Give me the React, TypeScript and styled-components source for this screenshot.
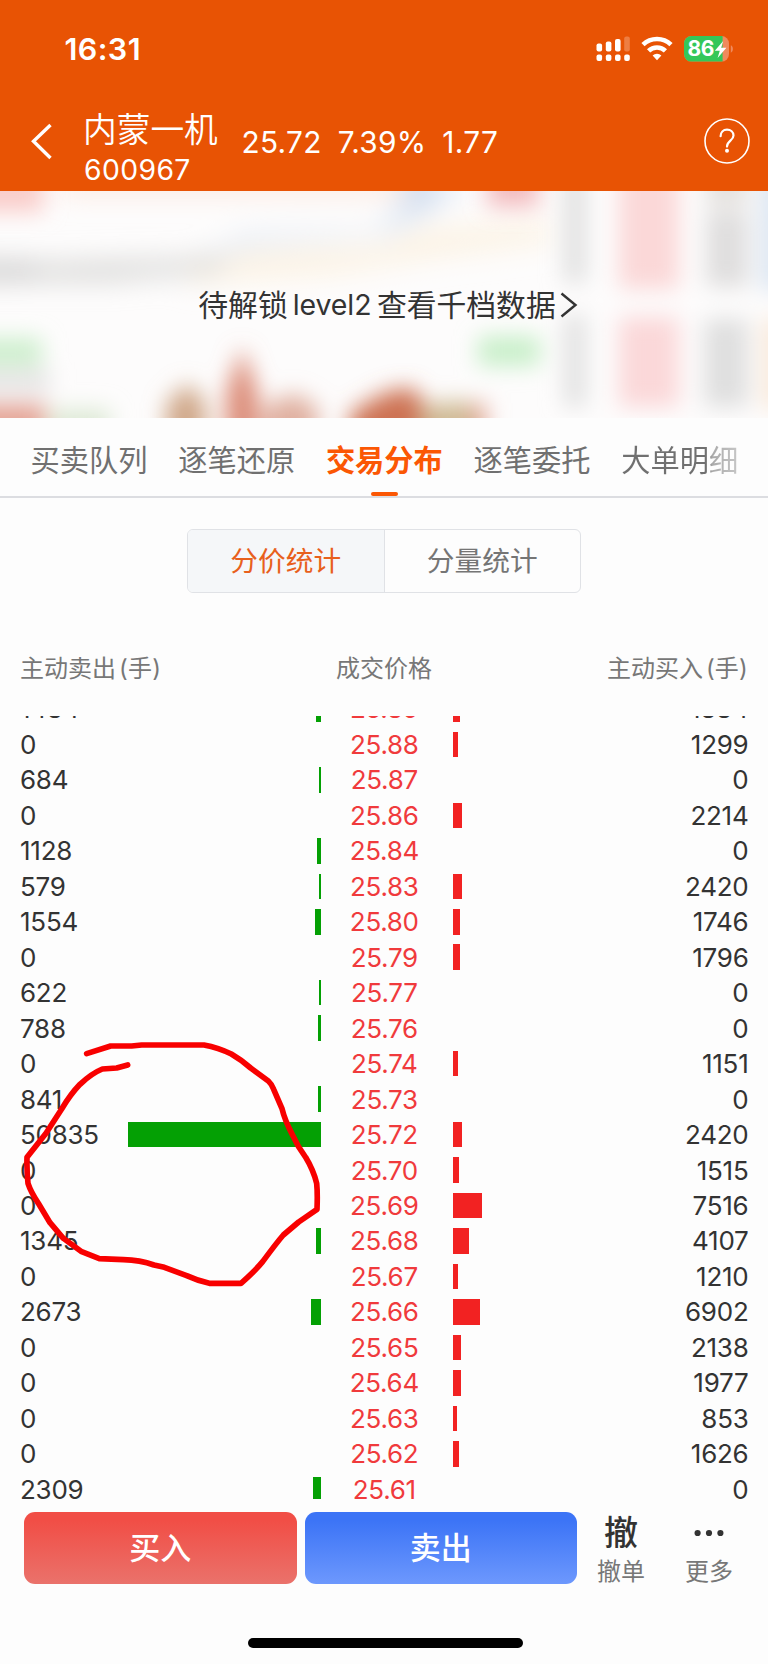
import React from "react";
import styled, { createGlobalStyle } from "styled-components";

const GlobalStyle = createGlobalStyle`
  * { box-sizing: border-box; }
  body {
    margin: 0;
    background: #fdfdfd;
    font-family: Inter, "Noto Sans CJK SC", sans-serif;
    color: #333;
  }
  button { font: inherit; border: 0; background: none; padding: 0; color: inherit; }
`;

const Page = styled.div`
  position: relative;
  width: 768px;
  height: 1664px;
  overflow: hidden;
  display: flex;
  flex-direction: column;
  background: #fdfdfd;
`;

/* ---------- header ---------- */

const Header = styled.header`
  height: 190.5px;
  flex: none;
  background: #e85304;
  color: #fff;
`;

const StatusBar = styled.div`
  height: 97px;
  padding: 0 34.5px 0 64.5px;
  display: flex;
  justify-content: space-between;
  align-items: center;
`;

const Clock = styled.span`
  font-size: 30.5px;
  font-weight: 600;
  line-height: 36px;
  letter-spacing: 0.4px;
`;

const StatusIcons = styled.div`
  display: flex;
  align-items: center;
`;

const TitleBar = styled.div`
  height: 93px;
  display: flex;
  align-items: flex-start;
  padding: 0 18px 0 30px;
`;

const BackIcon = styled.svg`
  width: 24px;
  height: 40px;
  margin: 24px 30px 0 0;
`;

const StockTitle = styled.div`
  width: 157.5px;
`;

const StockName = styled.div`
  font-size: 33.7px;
  line-height: 40px;
  margin-top: 13px;
  margin-left: -1px;
  font-weight: 350;
`;

const StockCode = styled.div`
  font-size: 28.3px;
  line-height: 34px;
  margin-top: 2.5px;
  letter-spacing: 0.4px;
`;

const Quote = styled.div`
  display: flex;
  flex: 1;
  gap: 16px;
  font-size: 29.8px;
  line-height: 36px;
  padding-top: 27px;
  letter-spacing: 0.3px;
`;

const HelpIcon = styled.svg`
  width: 46px;
  height: 46px;
  margin-top: 21px;
`;

/* ---------- locked preview ---------- */

const Preview = styled.section`
  position: relative;
  height: 227px;
  flex: none;
  overflow: hidden;
  display: flex;
  justify-content: center;
  padding-top: 94px;
`;

const PreviewArt = styled.svg`
  position: absolute;
  inset: 0;
  width: 768px;
  height: 227px;
`;

const UnlockLink = styled.a`
  position: relative;
  display: flex;
  align-items: center;
  height: 40px;
  font-size: 29.8px;
  line-height: 40px;
  padding-left: 11.5px;
  color: #333;
  white-space: nowrap;
`;

const Latin = styled.span`
  margin: 0 5.5px 0 5px;
  font-size: 28.5px;
  letter-spacing: -0.1px;
`;

/* ---------- tabs ---------- */

const Tabs = styled.nav`
  height: 80px;
  flex: none;
  display: flex;
  gap: 30.7px;
  padding-left: 30.5px;
  border-bottom: 2px solid #dcdde1;
`;

const Tab = styled.button<{ $active?: boolean }>`
  display: flex;
  flex-direction: column;
  align-items: center;
  flex: none;
  height: 78px;
  padding-top: 22px;
  font-size: 29.25px;
  line-height: 42px;
  color: ${(p) => (p.$active ? "#fb5704" : "#707070")};
  font-weight: ${(p) => (p.$active ? 700 : 400)};

  &::after {
    content: "";
    width: 27px;
    height: 4px;
    margin-top: 10px;
    border-radius: 2px;
    background: ${(p) => (p.$active ? "#fb5704" : "transparent")};
  }
`;

const Faded = styled.span`
  background: linear-gradient(90deg, #707070 74%, #aaa 78%, #c6c6c6);
  background-clip: text;
  -webkit-background-clip: text;
  color: transparent;
`;

const Segmented = styled.div`
  align-self: center;
  display: flex;
  flex: none;
  width: 394px;
  height: 63.5px;
  margin-top: 31.5px;
  border: 1.5px solid #e0e2e6;
  border-radius: 6px;
  overflow: hidden;
`;

const Segment = styled.button<{ $active?: boolean }>`
  flex: 1;
  font-size: 27.7px;
  line-height: 60px;
  color: ${(p) => (p.$active ? "#e8601c" : "#757575")};
  background: ${(p) => (p.$active ? "#f5f7f9" : "transparent")};
  & + & { border-left: 1.5px solid #e0e2e6; }
`;

/* ---------- distribution table ---------- */

const TableHead = styled.div`
  display: grid;
  grid-template-columns: 1fr 128px 1fr;
  flex: none;
  height: 36px;
  margin-top: 58px;
  padding: 0 20px;
  font-size: 24px;
  line-height: 36px;
  color: #777;
  text-align: center;
  > :first-child { text-align: left; }
  > :last-child { text-align: right; }
`;

const Paren = styled.span`
  margin-left: 3px;
  letter-spacing: 0.2px;
`;

const List = styled.div`
  height: 783px;
  margin-top: 29px;
  flex: none;
  overflow: hidden;
`;

const Rows = styled.div`
  margin-top: -24.3px;
`;

const Row = styled.div`
  display: grid;
  grid-template-columns: 108px 193.3px 126px 150px 1fr;
  align-items: center;
  height: 35.48px;
  padding: 0 19.5px 0 20px;
  font-size: 26px;
  line-height: 35px;
`;

const Volume = styled.span<{ $right?: boolean }>`
  text-align: ${(p) => (p.$right ? "right" : "left")};
  letter-spacing: -0.25px;
`;

const Price = styled.span`
  text-align: center;
  color: #f03a3c;
  letter-spacing: -0.3px;
`;

const Bar = styled.span<{ $buy?: boolean }>`
  height: 25.5px;
  background: ${(p) => (p.$buy ? "#f22222" : "#04a004")};
  justify-self: ${(p) => (p.$buy ? "start" : "end")};
  margin-left: ${(p) => (p.$buy ? "6px" : "0")};
`;

const Annotation = styled.svg`
  position: absolute;
  left: 0;
  top: 1020px;
  width: 400px;
  height: 290px;
  pointer-events: none;
`;

/* ---------- bottom bar ---------- */

const ActionBar = styled.footer`
  display: flex;
  flex: none;
  height: 72px;
  margin-top: 13px;
  padding-left: 24px;
`;

const TradeButton = styled.button<{ $side: "buy" | "sell" }>`
  width: 272.5px;
  height: 72px;
  margin-right: 8px;
  border-radius: 11px;
  color: #fff;
  font-size: 31px;
  font-weight: 500;
  line-height: 72px;
  background: ${(p) =>
    p.$side === "buy"
      ? "linear-gradient(#f14e46 12%, #ea726b)"
      : "linear-gradient(#3c74f6 12%, #6d98fd)"};
`;

const SmallActions = styled.div`
  display: flex;
  align-items: flex-start;
  margin-left: -8px;
`;

const SmallAction = styled.button`
  width: 88px;
  display: flex;
  flex-direction: column;
  align-items: center;
  font-size: 24px;
  line-height: 30px;
  color: #777;
  font-weight: 400;
`;

const SmallIcon = styled.span`
  height: 42px;
  margin-bottom: 3px;
  display: flex;
  align-items: center;
  font-size: 34px;
  font-weight: 500;
  color: #333;
`;

const HomeIndicator = styled.div`
  width: 275px;
  height: 10px;
  margin: 54px auto 0;
  transform: translateX(1px);
  border-radius: 5px;
  background: #000;
  flex: none;
`;

const MAX_VOLUME = 50835;
const barWidth = (v: number) => (v / MAX_VOLUME) * 193.3;

const rows: [number, string, number][] = [
  [1484, "25.89", 1884],
  [0, "25.88", 1299],
  [684, "25.87", 0],
  [0, "25.86", 2214],
  [1128, "25.84", 0],
  [579, "25.83", 2420],
  [1554, "25.80", 1746],
  [0, "25.79", 1796],
  [622, "25.77", 0],
  [788, "25.76", 0],
  [0, "25.74", 1151],
  [841, "25.73", 0],
  [50835, "25.72", 2420],
  [0, "25.70", 1515],
  [0, "25.69", 7516],
  [1345, "25.68", 4107],
  [0, "25.67", 1210],
  [2673, "25.66", 6902],
  [0, "25.65", 2138],
  [0, "25.64", 1977],
  [0, "25.63", 853],
  [0, "25.62", 1626],
  [2309, "25.61", 0],
];

function SignalIcon() {
  return (
    <svg width="36" height="28" viewBox="0 0 36 28" fill="#fff">
      <rect x="0.5" y="8.5" width="5.6" height="8" rx="2" />
      <rect x="9.8" y="6.5" width="5.6" height="10" rx="2" />
      <rect x="19" y="4" width="5.6" height="12.5" rx="2" />
      <rect x="28.2" y="1.5" width="5.6" height="15" rx="2" opacity="0.25" />
      {[0.5, 9.8, 19, 28.2].map((x) => (
        <rect key={x} x={x} y="19.5" width="5.6" height="6.5" rx="2" />
      ))}
    </svg>
  );
}

const WifiSvg = styled.svg`
  margin-left: 9px;
`;

function WifiIcon() {
  return (
    <WifiSvg width="32" height="25" viewBox="0 0 32 25">
      <g fill="none" stroke="#fff" strokeWidth="4.6">
        <path d="M2 8.6A20.2 20.2 0 0 1 30 8.6" />
        <path d="M7.6 14.9A12 12 0 0 1 24.4 14.9" />
      </g>
      <path d="M16 24.2l-4.4-4.6a6.3 6.3 0 0 1 8.8 0z" fill="#fff" />
    </WifiSvg>
  );
}

const BatterySvg = styled.svg`
  margin-left: 10.5px;
`;

function BatteryIcon() {
  return (
    <BatterySvg width="50" height="26" viewBox="0 0 50 26">
      <defs>
        <clipPath id="cell">
          <rect x="0" y="0" width="45" height="25.6" rx="7.5" />
        </clipPath>
      </defs>
      <g clipPath="url(#cell)">
        <rect width="45" height="26" fill="#f08a5c" />
        <rect width="38.6" height="26" fill="#34c759" />
      </g>
      <path d="M46.8 9.3c2.8 1 2.8 6.4 0 7.4z" fill="#f08a5c" />
      <text x="3.6" y="20.2" fontSize="21" fontWeight="700" fill="#fff" fontFamily="Inter" letterSpacing="-0.5">
        86
      </text>
      <path d="M39.2 5L30.8 14.8h5L33.6 22 42.4 11.8h-5.2z" fill="#fff" />
    </BatterySvg>
  );
}

const UnlockArrow = styled.svg`
  margin-left: -0.5px;
`;

function BlurredChart() {
  return (
    <PreviewArt viewBox="0 0 768 227" preserveAspectRatio="none">
      <defs>
        <filter id="soft" filterUnits="userSpaceOnUse" x="-60" y="-60" width="900" height="360">
          <feGaussianBlur stdDeviation="11" />
        </filter>
        <filter id="softer" filterUnits="userSpaceOnUse" x="-60" y="-60" width="900" height="360">
          <feGaussianBlur stdDeviation="14" />
        </filter>
      </defs>
      <rect width="768" height="227" fill="#fdfcfc" />
      <g filter="url(#softer)">
        <rect x="60" y="-18" width="350" height="20" fill="#fbe6dc" />
        <path d="M180 76L240 60 380 55 420 38 550 30V52L440 66 330 84 190 92z" fill="#fcf3e4" />
        <path d="M100 82L180 80 245 44 380 40 410 -10 470 -10 440 14 390 44 250 56 180 84z" fill="#dfe8f4" />
        <path d="M-40 74H30L100 72 180 70 220 66V78L110 88H-40z" fill="#cfcfcd" />
        <rect x="-40" y="72" width="76" height="16" fill="#c2c2c2" />
        <rect x="408" y="-30" width="24" height="46" fill="#cfdcee" />
      </g>
      <g filter="url(#soft)">
        <rect x="-40" y="-40" width="84" height="61" fill="#f9cdca" />
        <rect x="487" y="-40" width="52" height="56" fill="#f3bcbf" />
        <rect x="564" y="-40" width="22" height="132" fill="#e0e0e0" />
        <rect x="564" y="124" width="22" height="92" fill="#e1e1e1" />
        <rect x="619" y="-40" width="60" height="138" fill="#fbd8d8" />
        <rect x="619" y="126" width="60" height="90" fill="#fbd8d9" />
        <rect x="706" y="-40" width="42" height="54" fill="#e4e1de" />
        <rect x="706" y="20" width="42" height="76" fill="#dfdede" />
        <rect x="704" y="128" width="44" height="88" fill="#dfdfdf" />
        <rect x="760" y="-20" width="44" height="120" fill="#dde7f3" />
        <rect x="762" y="128" width="44" height="90" fill="#faeadb" />
        <rect x="-40" y="147" width="82" height="28" fill="#cdefcd" />
        <rect x="478" y="145" width="62" height="30" fill="#c8efc9" />
        <rect x="-40" y="178" width="90" height="24" fill="#e6e5e5" />
        <rect x="-40" y="212" width="86" height="60" fill="#e5a698" />
        <rect x="50" y="218" width="60" height="50" fill="#dde9d5" />
        <path d="M166 270V212L188 192 206 212V270z" fill="#d0a88a" />
        <path d="M226 270V202L242 156 258 202V270z" fill="#dc8c78" />
        <path d="M262 270V216L294 202 318 216V270z" fill="#e0b0a0" />
        <path d="M350 270V222L384 202 410 196 428 214V270z" fill="#cd7253" />
        <path d="M422 270V216L450 210 486 214V270z" fill="#cfba94" />
        <rect x="472" y="212" width="14" height="58" fill="#e4a596" />
      </g>
    </PreviewArt>
  );
}

export default function App() {
  return (
    <>
      <GlobalStyle />
      <Page>
        <Header>
          <StatusBar>
            <Clock>16:31</Clock>
            <StatusIcons>
              <SignalIcon />
              <WifiIcon />
              <BatteryIcon />
            </StatusIcons>
          </StatusBar>
          <TitleBar>
            <BackIcon viewBox="0 0 24 40" fill="none" stroke="#fff" strokeWidth="3.4">
              <path d="M20.5 4L3.5 20.3 20.5 37" />
            </BackIcon>
            <StockTitle>
              <StockName>内蒙一机</StockName>
              <StockCode>600967</StockCode>
            </StockTitle>
            <Quote>
              <span>25.72</span>
              <span>7.39%</span>
              <span>1.77</span>
            </Quote>
            <HelpIcon viewBox="0 0 46 46" fill="none" stroke="#fff">
              <circle cx="23" cy="23" r="22" strokeWidth="1.6" />
              <path
                d="M16.6 18.2c0-4 2.7-6.6 6.4-6.6s6.5 2.4 6.5 5.9c0 5-6.5 5.4-6.5 11.1"
                strokeWidth="2.2"
                strokeLinecap="round"
              />
              <circle cx="23" cy="32.8" r="2" fill="#fff" stroke="none" />
            </HelpIcon>
          </TitleBar>
        </Header>

        <Preview>
          <BlurredChart />
          <UnlockLink>
            待解锁<Latin>level2</Latin>查看千档数据
            <UnlockArrow width="26" height="30" viewBox="0 0 26 30" fill="none" stroke="#333" strokeWidth="2.4">
              <path d="M6.5 3.5L20.5 15 6.5 26.5" />
            </UnlockArrow>
          </UnlockLink>
        </Preview>

        <Tabs>
          <Tab>买卖队列</Tab>
          <Tab>逐笔还原</Tab>
          <Tab $active>交易分布</Tab>
          <Tab>逐笔委托</Tab>
          <Tab>
            <Faded>大单明细</Faded>
          </Tab>
        </Tabs>

        <Segmented>
          <Segment $active>分价统计</Segment>
          <Segment>分量统计</Segment>
        </Segmented>

        <TableHead>
          <span>
            主动卖出<Paren>(手)</Paren>
          </span>
          <span>成交价格</span>
          <span>
            主动买入<Paren>(手)</Paren>
          </span>
        </TableHead>

        <List>
          <Rows>
            {rows.map(([sell, price, buy]) => (
              <Row key={price}>
                <Volume>{sell}</Volume>
                <Bar style={{ width: barWidth(sell) }} />
                <Price>{price}</Price>
                <Bar $buy style={{ width: barWidth(buy) }} />
                <Volume $right>{buy}</Volume>
              </Row>
            ))}
          </Rows>
        </List>

        <ActionBar>
          <TradeButton $side="buy">买入</TradeButton>
          <TradeButton $side="sell">卖出</TradeButton>
          <SmallActions>
            <SmallAction>
              <SmallIcon>撤</SmallIcon>
              撤单
            </SmallAction>
            <SmallAction>
              <SmallIcon>
                <svg width="32" height="8" viewBox="0 0 32 8" fill="#333">
                  <circle cx="4.6" cy="4" r="3.1" />
                  <circle cx="16" cy="4" r="3.1" />
                  <circle cx="27.4" cy="4" r="3.1" />
                </svg>
              </SmallIcon>
              更多
            </SmallAction>
          </SmallActions>
        </ActionBar>

        <HomeIndicator />

        <Annotation viewBox="0 0 1200 870" fill="none" stroke="#f80000" strokeWidth="17">
          <path
            strokeLinecap="round"
            strokeLinejoin="round"
            d="M260 101L332 78H395L425 75H612Q655 83 694 102Q722 118 752 144L805 183Q815 192 821 208L846 266Q854 300 877 344Q893 380 917 412Q940 450 950 490Q953 520 951 568L896 606L850 645Q830 668 788 725Q765 753 723 790H628Q595 783 560 767L493 742L462 735Q420 720 370 719L298 716L243 694L190 655L150 608L115 550Q92 515 84 490Q80 450 81 412L138 340L185 267Q212 222 240 193Q275 160 307 147L350 144L383 135"
          />
        </Annotation>
      </Page>
    </>
  );
}
